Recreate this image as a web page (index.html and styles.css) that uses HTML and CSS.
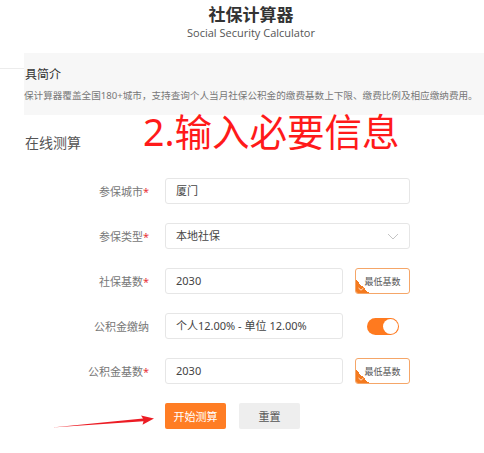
FILE: index.html
```html
<!DOCTYPE html>
<html lang="zh-CN">
<head>
    <meta charset="UTF-8">
    <meta name="viewport" content="width=device-width, initial-scale=1.0">
    <title>社保计算器</title>
    <link rel="stylesheet" href="styles.css">
</head>
<body>

<section class="header">
    <h1>社保计算器</h1>
    <p class="subtitle">Social Security Calculator</p>
</section>

<section class="intro">
    <div class="intro-tab"></div>
    <div class="intro-panel">
        <h3>具简介</h3>
        <p>保计算器覆盖全国180+城市，支持查询个人当月社保公积金的缴费基数上下限、缴费比例及相应缴纳费用。</p>
    </div>
</section>

<section class="calc">
    <div class="calc-head">
        <h2>在线测算</h2>
        <span class="note">2.输入必要信息</span>
    </div>

    <div class="form">
        <div class="row">
            <label>参保城市<em>*</em></label>
            <div class="input wide">厦门</div>
        </div>
        <div class="row">
            <label>参保类型<em>*</em></label>
            <div class="input wide select">
                <span>本地社保</span>
                <svg width="12" height="7" viewBox="0 0 12 7"><path d="M1 1 L6 6 L11 1" fill="none" stroke="#c4c4c4" stroke-width="1"/></svg>
            </div>
        </div>
        <div class="row">
            <label>社保基数<em>*</em></label>
            <div class="input">2030</div>
            <button class="min-btn">最低基数<span class="corner"><svg width="6" height="4" viewBox="0 0 6 4"><path d="M0.5 1 L3 3.2 L5.5 1" fill="none" stroke="#fff" stroke-width="0.8"/></svg></span></button>
        </div>
        <div class="row">
            <label>公积金缴纳</label>
            <div class="input">个人12.00% - 单位 12.00%</div>
            <div class="toggle-wrap"><span class="toggle"><span class="knob"></span></span></div>
        </div>
        <div class="row">
            <label>公积金基数<em>*</em></label>
            <div class="input">2030</div>
            <button class="min-btn">最低基数<span class="corner"><svg width="6" height="4" viewBox="0 0 6 4"><path d="M0.5 1 L3 3.2 L5.5 1" fill="none" stroke="#fff" stroke-width="0.8"/></svg></span></button>
        </div>
        <div class="actions">
            <button class="start">开始测算</button>
            <button class="reset">重置</button>
        </div>
    </div>
</section>

<!-- 标注箭头 -->
<svg class="arrow" width="160" height="40" viewBox="0 0 160 40">
    <path d="M52 27.5 L143 18.6 L141 15.5 L154 18.6 L142.5 24.8 L143.5 21.2 Z" fill="#ec1c24"/>
</svg>

</body>
</html>
```

FILE: styles.css
```css
body {
    margin: 0;
    padding: 0;
    width: 484px;
    font-family: "Noto Sans", "Noto Sans CJK SC", sans-serif;
    background-color: #fff;
    color: #333;
    position: relative;
    overflow: hidden;
}

.header {
    padding-top: 4px;
    padding-left: 18px;
    text-align: center;
}

.header h1 {
    margin: 0;
    font-size: 17px;
    line-height: 22px;
    font-weight: bold;
    color: #333;
}

.subtitle {
    margin: 0;
    font-family: "Open Sans", "Noto Sans CJK SC", sans-serif;
    font-size: 11px;
    line-height: 14px;
    color: #555;
}

.intro {
    display: flex;
    margin-top: 13px;
}

.intro-tab {
    width: 24px;
    height: 15px;
    border-bottom: 1px solid #ececec;
    flex-shrink: 0;
}

.intro-panel {
    flex: 1;
    min-width: 0;
    background-color: #f7f7f7;
    padding: 14px 0 12px 1px;
}

.intro-panel h3 {
    margin: 0;
    font-size: 12px;
    line-height: 16px;
    font-weight: normal;
    color: #333;
}

.intro-panel p {
    margin: 6px 0 0 -1px;
    font-size: 9.6px;
    line-height: 14px;
    color: #777;
    white-space: nowrap;
}

.calc-head {
    display: flex;
    align-items: flex-start;
    padding-left: 25px;
    margin-top: -3px;
}

.calc-head h2 {
    width: 118px;
    margin: 21px 0 0 0;
    font-size: 14px;
    line-height: 20px;
    font-weight: normal;
    color: #555;
}

.note {
    font-size: 37.5px;
    line-height: 40px;
    color: #ff1a1a;
    white-space: nowrap;
}

.form {
    margin-top: 25px;
    display: flex;
    flex-direction: column;
    gap: 19px;
}

.row {
    display: flex;
    align-items: center;
    height: 26px;
}

.row label {
    width: 157px;
    padding-right: 8px;
    box-sizing: border-box;
    text-align: right;
    font-size: 11px;
    color: #777;
}

.row label em {
    font-style: normal;
    color: #e8363a;
}

.input {
    width: 178px;
    height: 26px;
    box-sizing: border-box;
    border: 1px solid #e6e6e6;
    border-radius: 3px;
    padding-left: 10px;
    font-size: 11px;
    line-height: 24px;
    color: #444;
    margin-left: 8px;
}

.input.wide {
    width: 245px;
}

.select {
    display: flex;
    align-items: center;
    justify-content: space-between;
    padding-right: 10px;
}

.min-btn {
    position: relative;
    margin-left: 12px;
    width: 55px;
    height: 26px;
    padding: 0;
    border: 1px solid #f5a668;
    border-radius: 3px;
    background-color: #fff;
    font-family: "Noto Sans CJK SC", sans-serif;
    font-size: 9px;
    color: #555;
    overflow: hidden;
}

.corner {
    position: absolute;
    left: 0;
    bottom: 0;
    width: 13px;
    height: 13px;
    background: linear-gradient(to top right, #f47a1f 50%, transparent 50%);
}

.corner svg {
    position: absolute;
    left: 2px;
    bottom: 2px;
}

.toggle-wrap {
    margin-left: 12px;
    width: 55px;
    display: flex;
    justify-content: center;
}

.toggle {
    width: 32px;
    height: 17px;
    border-radius: 9px;
    background-color: #ff7a1f;
    display: flex;
    align-items: center;
    justify-content: flex-end;
    padding-right: 1px;
    box-sizing: border-box;
}

.knob {
    width: 15px;
    height: 15px;
    border-radius: 50%;
    background-color: #fff;
}

.actions {
    display: flex;
    gap: 13px;
    padding-left: 165px;
}

.actions button {
    width: 61px;
    height: 26px;
    border: none;
    border-radius: 2px;
    font-family: "Noto Sans CJK SC", sans-serif;
    font-size: 11px;
    padding: 0;
}

.start {
    background-color: #ff7d24;
    color: #fff;
}

.reset {
    background-color: #eeeeee;
    color: #555;
}

.arrow {
    position: absolute;
    left: 0;
    top: 400px;
}
```
